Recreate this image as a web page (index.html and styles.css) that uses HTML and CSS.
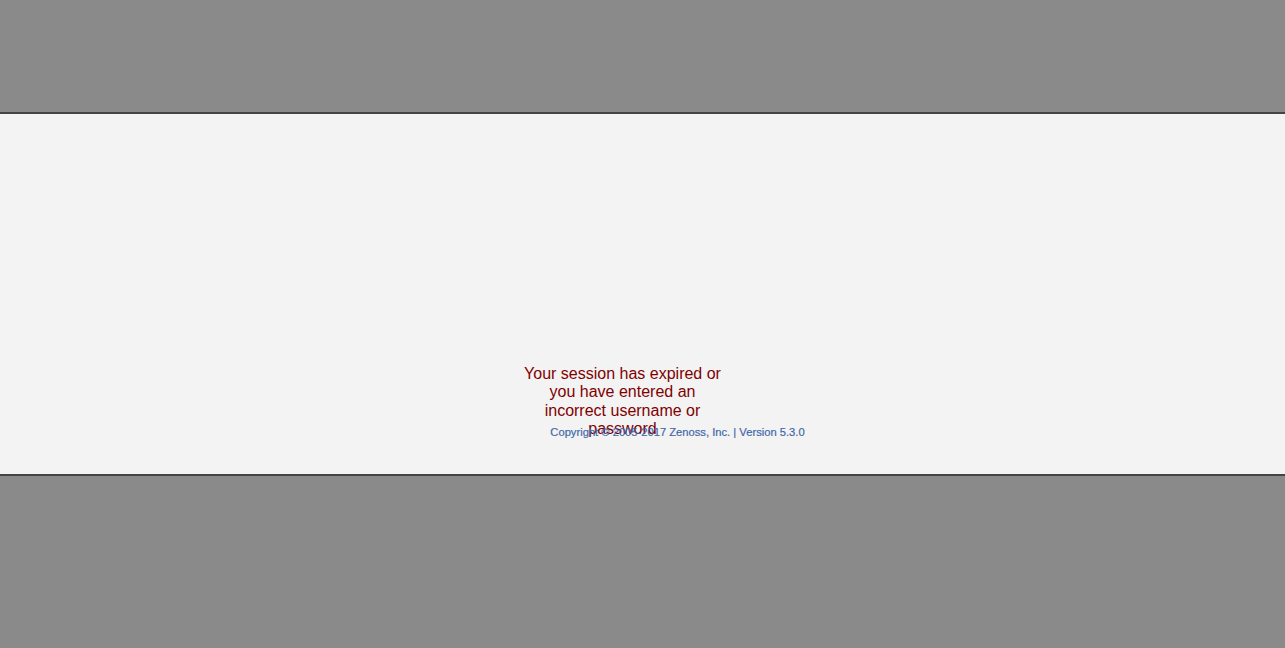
FILE: index.html
```html
<!DOCTYPE html>
<html>
<head>
<meta charset="utf-8">
<link rel="stylesheet" href="styles.css">
</head>
<body>
<div class="top"></div>
<div class="band">
  <div class="box">
    <div class="error">Your session has expired or you have entered an incorrect username or password</div>
    <div class="copy">Copyright © 2005-2017 Zenoss, Inc. | Version 5.3.0</div>
  </div>
</div>
<div class="bottom"></div>
</body>
</html>
```
FILE: styles.css
```css
html, body {
  margin: 0;
  padding: 0;
  background: #8a8a8a;
  font-family: "Liberation Sans", Arial, sans-serif;
}
.top {
  height: 112px;
}
.band {
  height: 360px;
  background: #f3f3f3;
  border-top: 2px solid #444;
  border-bottom: 2px solid #444;
}
.box {
  width: 310px;
  margin-left: calc(50% - 120px);
  padding-top: 251px;
}
.error {
  width: 200px;
  height: 60px;
  color: #800000;
  font-size: 16px;
  line-height: 18.3px;
  text-align: center;
}
.copy {
  color: #3f68aa;
  font-size: 11.2px;
  line-height: 14px;
  text-align: center;
  -webkit-text-stroke: 0.2px #3f68aa;
}
```
